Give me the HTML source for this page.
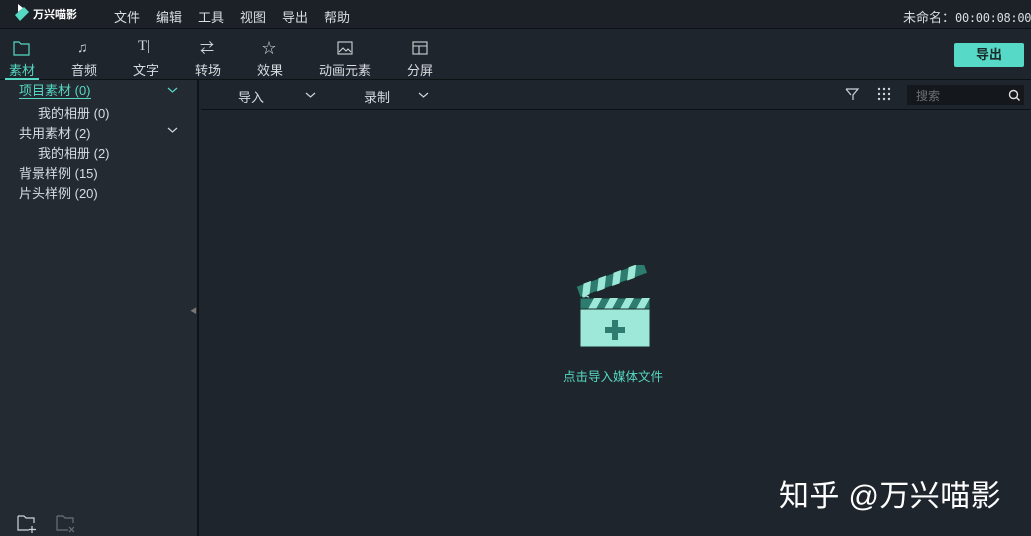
<!DOCTYPE html>
<html><head><meta charset="utf-8"><style>
*{margin:0;padding:0;box-sizing:border-box}
body{width:1031px;height:536px;overflow:hidden;background:#1f252c;font-family:"Liberation Sans","Noto Sans CJK SC",sans-serif;color:#d8dde2;position:relative;font-size:13px}
.a{position:absolute;white-space:nowrap}
.menu{left:0;top:0;width:1031px;height:29px;background:#1c2127;border-bottom:1px solid #0e1114}
.tool{left:0;top:30px;width:1031px;height:50px;background:#1f252c;border-bottom:1px solid #0e1114}
.left{left:0;top:80px;width:199px;height:456px;background:#232a32;border-right:2px solid #111417}
.sub{left:201px;top:80px;width:830px;height:30px;border-bottom:1px solid #0e1114}
.ti{font-size:13px;color:#d8dde2}
svg{position:absolute}
</style></head><body>
<div class="a menu"></div>
<svg style="left:13px;top:3px" width="18" height="20"><path d="M5 1 L10 5 L5 9 Z" fill="#fff"/><path d="M2 12 L11 4 L16 9 L7 18 Z" fill="#55d9c3"/></svg>
<div class="a" style="left:33px;top:6px;font-size:11px;font-weight:bold;color:#fff">万兴喵影</div>
<div class="a" style="left:114px;top:7px;font-size:13px">文件</div>
<div class="a" style="left:156px;top:7px;font-size:13px">编辑</div>
<div class="a" style="left:198px;top:7px;font-size:13px">工具</div>
<div class="a" style="left:240px;top:7px;font-size:13px">视图</div>
<div class="a" style="left:282px;top:7px;font-size:13px">导出</div>
<div class="a" style="left:324px;top:7px;font-size:13px">帮助</div>
<div class="a" style="left:903px;top:7px;font-size:13px">未命名：<span style="font-family:'DejaVu Sans Mono',monospace;font-size:12px;letter-spacing:-0.3px">00:00:08:00</span></div>
<div class="a tool"></div>
<svg style="left:13px;top:41px" width="17" height="15" fill="none" stroke="#55d9c3" stroke-width="1.2"><path d="M1 1h5l2 2h8v11H1z"/></svg>
<div class="a ti" style="left:9px;top:60px;color:#55d9c3">素材</div>
<div class="a" style="left:5px;top:78px;width:34px;height:2px;background:#55d9c3"></div>
<div class="a" style="left:77px;top:39px;font-size:14px;color:#cfd4d8">♫</div>
<div class="a ti" style="left:71px;top:60px">音频</div>
<div class="a" style="left:138px;top:38px;font-size:15px;font-family:'Liberation Serif';color:#cfd4d8">T|</div>
<div class="a ti" style="left:133px;top:60px">文字</div>
<div class="a" style="left:200px;top:38px;font-size:14px;color:#cfd4d8">⇄</div>
<div class="a ti" style="left:195px;top:60px">转场</div>
<div class="a" style="left:262px;top:38px;font-size:14px;color:#cfd4d8">☆</div>
<div class="a ti" style="left:257px;top:60px">效果</div>
<svg style="left:337px;top:41px" width="16" height="14" fill="none" stroke="#cfd4d8" stroke-width="1.1"><rect x="1" y="1" width="14" height="12"/><path d="M2 11l4-4 3 3 2-2 3 3"/></svg>
<div class="a ti" style="left:319px;top:60px">动画元素</div>
<svg style="left:412px;top:41px" width="16" height="14" fill="none" stroke="#cfd4d8" stroke-width="1.1"><rect x="1" y="1" width="14" height="12"/><path d="M1 5h14M7 5v8"/></svg>
<div class="a ti" style="left:407px;top:60px">分屏</div>
<div class="a" style="left:954px;top:43px;width:70px;height:24px;background:#56d9c6;border-radius:2px;color:#1a2a2a;font-weight:bold;text-align:center;line-height:24px;font-size:13px">导出</div>
<div class="a left"></div>
<div class="a" style="left:19px;top:83px;color:#55d9c3;border-bottom:1px solid #55d9c3;line-height:15px">项目素材 (0)</div>
<svg style="left:167px;top:87px" width="11" height="6" fill="none" stroke="#55d9c3" stroke-width="1.2"><path d="M1 1l4.5 4 4.5-4"/></svg>
<div class="a" style="left:38px;top:103px">我的相册 (0)</div>
<div class="a" style="left:19px;top:123px">共用素材 (2)</div>
<svg style="left:167px;top:127px" width="11" height="6" fill="none" stroke="#cfd4d8" stroke-width="1.2"><path d="M1 1l4.5 4 4.5-4"/></svg>
<div class="a" style="left:38px;top:143px">我的相册 (2)</div>
<div class="a" style="left:19px;top:163px">背景样例 (15)</div>
<div class="a" style="left:19px;top:183px">片头样例 (20)</div>
<div class="a" style="left:190px;top:306px;font-size:7px;color:#777">◀</div>
<svg style="left:17px;top:515px" width="22" height="18" fill="none" stroke="#cfd4d8" stroke-width="1.2"><path d="M1 1h6l2 2h8v5M1 1v14h11M15 11v7M12 14.5h7"/></svg>
<svg style="left:56px;top:515px" width="22" height="18" fill="none" stroke="#6a7177" stroke-width="1.2"><path d="M1 1h6l2 2h8v5M1 1v14h11M13 12l5 5M18 12l-5 5"/></svg>
<div class="a sub"></div>
<div class="a" style="left:238px;top:87px">导入</div>
<svg style="left:305px;top:92px" width="11" height="6" fill="none" stroke="#cfd4d8" stroke-width="1.2"><path d="M1 1l4.5 4 4.5-4"/></svg>
<div class="a" style="left:364px;top:87px">录制</div>
<svg style="left:418px;top:92px" width="11" height="6" fill="none" stroke="#cfd4d8" stroke-width="1.2"><path d="M1 1l4.5 4 4.5-4"/></svg>
<svg style="left:845px;top:87px" width="15" height="15" fill="none" stroke="#cfd4d8" stroke-width="1.2"><path d="M1 2h12L8 8v5M6 8L1 2"/></svg>
<svg style="left:877px;top:87px" width="15" height="15" fill="#cfd4d8"><circle cx="2" cy="2" r="1.2"/><circle cx="7" cy="2" r="1.2"/><circle cx="12" cy="2" r="1.2"/><circle cx="2" cy="7" r="1.2"/><circle cx="7" cy="7" r="1.2"/><circle cx="12" cy="7" r="1.2"/><circle cx="2" cy="12" r="1.2"/><circle cx="7" cy="12" r="1.2"/><circle cx="12" cy="12" r="1.2"/></svg>
<div class="a" style="left:907px;top:85px;width:117px;height:20px;background:#14181c"></div>
<div class="a" style="left:916px;top:87px;color:#6a7177;font-size:12px">搜索</div>
<svg style="left:1008px;top:89px" width="13" height="13" fill="none" stroke="#e0e0e0" stroke-width="1.4"><circle cx="5.5" cy="5.5" r="4"/><path d="M8.5 8.5l3 3"/></svg>
<svg style="left:574px;top:265px" width="82" height="86">
<g transform="rotate(-20 8 32)"><rect x="6" y="20" width="72" height="12" fill="#2e7b70" stroke="#1a2a2a" stroke-width="1.2"/>
<path d="M14 20h8l-6 12h-8zM30 20h8l-6 12h-8zM46 20h8l-6 12h-8zM62 20h8l-6 12h-8z" fill="#9de8d8"/></g>
<circle cx="12" cy="34" r="3" fill="none" stroke="#9de8d8" stroke-width="1.5"/>
<rect x="6" y="33" width="70" height="11" fill="#2e7b70" stroke="#1a2a2a" stroke-width="1"/>
<path d="M14 44h8l6-11h-8zM30 44h8l6-11h-8zM46 44h8l6-11h-8zM62 44h8l6-11h-8z" fill="#9de8d8"/>
<rect x="6" y="44" width="70" height="38" fill="#9de8d8" stroke="#1a2a2a" stroke-width="1"/>
<path d="M38 55h6v7h7v6h-7v7h-6v-7h-7v-6h7z" fill="#2e7b70"/>
</svg>
<div class="a" style="left:563px;top:366px;color:#55d9c3;font-size:12.5px">点击导入媒体文件</div>
<div class="a" style="left:779px;top:471px;color:#fff;font-size:30px;letter-spacing:0.4px">知乎 @万兴喵影</div>
</body></html>
